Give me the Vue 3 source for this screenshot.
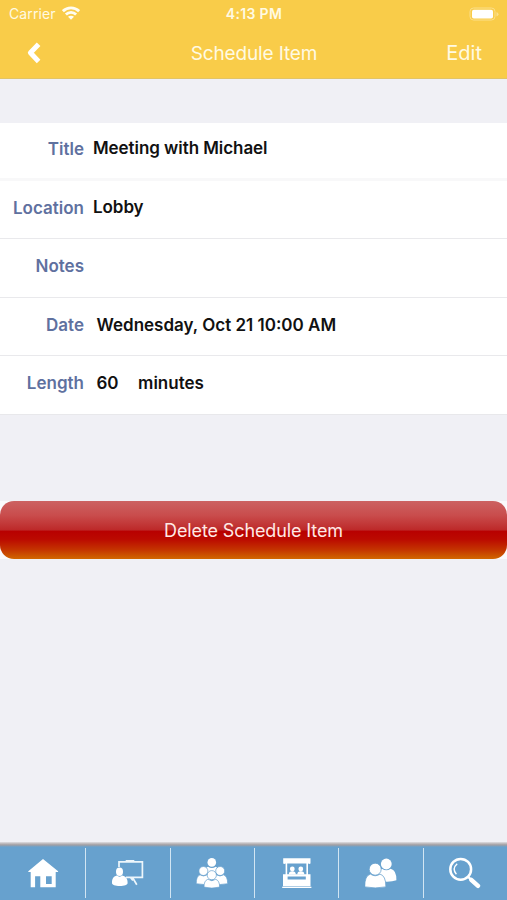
<script setup>
const rows = [
  { label: 'Title', value: 'Meeting with Michael', key: 'title' },
  { label: 'Location', value: 'Lobby', key: 'location' },
  { label: 'Notes', value: '', key: 'notes' },
  { label: 'Date', value: 'Wednesday, Oct 21 10:00 AM', key: 'date' },
  { label: 'Length', value: '60', unit: 'minutes', key: 'length' },
]
</script>

<template>
  <div class="screen">
    <header class="top">
      <div class="status">
        <div class="carrier">
          <span class="carrier-name">Carrier</span>
          <svg class="wifi" viewBox="0 0 18 14" width="18" height="14" fill="none" stroke="#fffdf2" stroke-width="2.8">
            <path d="M.9 5.2C5.4.8 12.6.8 17.1 5.2" />
            <path d="M3.9 8.5c2.8-2.8 7.4-2.8 10.2 0" />
            <path d="M9 13.8 6 10.8c1.6-1.5 4.4-1.5 6 0z" fill="#fffdf2" stroke="none" />
          </svg>
        </div>
        <span class="clock">4:13 PM</span>
        <svg class="battery" viewBox="0 0 30 14" width="30" height="14">
          <rect x="1" y="1" width="25" height="12" rx="3.5" fill="none" stroke="#fbdf8b" />
          <rect x="3" y="2.8" width="21" height="8.8" rx="1.8" fill="#fff" />
          <path d="M27.5 5v4.5q2-.6 2-2.2t-2-2.3z" fill="#fbdf8b" />
        </svg>
      </div>
      <nav class="nav">
        <svg class="back" viewBox="0 0 16 24" width="16" height="24">
          <path d="M12.6 3.2 4.4 11.8l8.2 8.6" fill="none" stroke="#fff" stroke-width="5" stroke-linejoin="round" />
        </svg>
        <span class="heading">Schedule Item</span>
        <span class="edit">Edit</span>
      </nav>
    </header>

    <main class="content">
      <section class="form">
        <div v-for="row in rows" :key="row.key" class="row" :class="row.key">
          <span class="label">{{ row.label }}</span>
          <span class="value">{{ row.value }}</span>
          <span v-if="row.unit" class="unit">{{ row.unit }}</span>
        </div>
      </section>
      <div class="delete-cell">
        <button class="delete"><span>Delete Schedule Item</span></button>
      </div>
    </main>

    <footer class="tabs">
      <div class="tab">
        <svg viewBox="0 0 32 32" width="32" height="32" fill="#fff">
          <path fill-rule="evenodd" d="M16 2 1.3 14.2v.8h2.4v15.3h4.4v-11h5.2v11h15.4V15h2.4v-.8L16 2zM19 19.3h5.7V27H19z" />
        </svg>
      </div>
      <div class="tab">
        <svg viewBox="0 0 32 32" width="32" height="32" fill="#fff">
          <path d="M7 10V4.8h23.4v15.5H14M13.7 3.9h8.6M20.5 20.5l4.3 7.2M18.5 20.5l2.4 3" fill="none" stroke="#edf6fb" stroke-width="1.7" />
          <ellipse cx="7.5" cy="14.8" rx="3.5" ry="4.2" />
          <path d="M4.9 18.5c1.4 1.5 4 1.5 5.4 0 4 1 5.4 3.5 5.3 7.5 0 2-3.3 3-7.8 3S0 28 0 26c0-4 1-6.5 4.9-7.5z" />
        </svg>
      </div>
      <div class="tab">
        <svg class="nudge" viewBox="0 0 32 32" width="32" height="32" fill="#fff">
          <circle cx="15.8" cy="5.4" r="4.3" />
          <path d="M12 9.8q4 2.5 7.7 0 2.8 1.2 2.8 6H9.2q0-4.8 2.8-6z" />
          <g stroke="#67a1ce" stroke-width=".7">
            <circle cx="7.4" cy="14" r="4.5" />
            <circle cx="24.2" cy="14" r="4.5" />
            <path d="M4 17.8q3.5 2.4 7 0 4 1.7 4 8.9-7 1.6-14.8 0Q.1 19.3 4 17.8z" />
            <path d="M20.5 17.8q3.5 2.4 7 0 4.2 1.5 4.2 8.9-7.5 1.6-14.7 0 0-7.3 3.5-8.9z" />
            <circle cx="15.8" cy="18.2" r="4.6" />
            <path d="M11.8 22.3q4 2.8 8 0 3.9 1.4 3.8 7.8-7.8 2-15.6 0-.1-6.4 3.8-7.8z" />
          </g>
        </svg>
      </div>
      <div class="tab">
        <svg viewBox="0 0 32 32" width="32" height="32" fill="#fff">
          <path d="M2.2 1.3h27.3v5.3q-1.1.9-2.3 0H4.5q-1.2.9-2.3 0z" />
          <path d="M4.6 6h1.6v12H4.6zM25.4 6H27v12h-1.6z" />
          <circle cx="11.3" cy="12" r="2.4" /><circle cx="19.8" cy="12" r="2.4" />
          <path d="M7.8 17.5q0-3.2 3.5-3.2t3.5 3.2zM16.3 17.5q0-3.2 3.5-3.2t3.5 3.2z" />
          <path fill-rule="evenodd" d="M2 17.3h27.5v11.9H2zM6.6 19.4v3.2h18.2v-3.2z" />
          <path d="M1.2 29.7h29.2V31H1.2z" />
        </svg>
      </div>
      <div class="tab">
        <svg viewBox="0 0 32 32" width="32" height="32" fill="#fff">
          <circle cx="21.3" cy="7" r="5.4" />
          <path d="M17 11.7q4.3 3 8.6 0 6 1.2 5.8 11.6-5 1.8-12.4 1.3L13 15q1-2.6 4-3.3z" />
          <g stroke="#67a1ce" stroke-width=".8">
            <circle cx="10.2" cy="12.2" r="6" />
            <path d="M5.4 17.1q4.8 3.3 9.6 0 5.9 1.5 5.9 12.8-10.6 2-21.2 0-.1-11.2 5.7-12.8z" />
          </g>
        </svg>
      </div>
      <div class="tab">
        <svg class="nudge" viewBox="0 0 32 32" width="32" height="32" fill="none" stroke="#fff">
          <circle cx="11.7" cy="12.3" r="10.4" stroke-width="2.5" />
          <path d="M8.2 6.8q-5.6 5-.8 10.4" stroke-width="1.4" />
          <path d="m19 19.6 3 3" stroke-width="2.2" />
          <path d="m22.3 22.8 6.7 6" stroke-width="4.4" stroke-linecap="round" />
        </svg>
      </div>
    </footer>
  </div>
</template>

<style>
body {
  margin: 0;
}
</style>

<style scoped>
.screen {
  display: flex;
  flex-direction: column;
  width: 507px;
  height: 900px;
  overflow: hidden;
  background: #f0f0f5;
  font-family: Inter, "Liberation Sans", sans-serif;
}
.top {
  height: 79px;
  box-sizing: border-box;
  background: #f9cc49;
  border-bottom: 1px solid #e2c466;
  color: #fffae3;
  flex: none;
}
.status {
  display: grid;
  grid-template-columns: 1fr auto 1fr;
  height: 27px;
  align-items: center;
  padding: 0 8px 0 9px;
}
.carrier {
  display: flex;
  align-items: center;
  gap: 6px;
}
.carrier-name {
  font-size: 14px;
  letter-spacing: 0.1px;
}
.wifi {
  margin-top: -2px;
}
.clock {
  font-size: 14px;
  font-weight: 600;
  letter-spacing: 0.35px;
}
.battery {
  justify-self: end;
}
.nav {
  display: grid;
  grid-template-columns: 1fr auto 1fr;
  align-items: center;
  height: 51px;
  padding: 0 25px 0 26px;
}
.heading {
  font-size: 19px;
  letter-spacing: -0.13px;
  padding-top: 2px;
}
.edit {
  justify-self: end;
  font-size: 20px;
}
.content {
  flex: 1;
  padding-top: 44px;
}
.form {
  height: 291px;
  display: grid;
  grid-template-rows: 58px 58px 59px 58px 58px;
  background: #fff;
  border-bottom: 1px solid #e8e8eb;
}
.row {
  display: flex;
  align-items: flex-start;
  padding-top: 16px;
  box-sizing: border-box;
  border-bottom: 1px solid #e9e9ec;
  font-size: 17px;
  line-height: 21px;
  font-weight: 600;
}
.row.title {
  padding-top: 15px;
  border-bottom: 3px solid #f8f8f9;
}
.row.date,
.row.length {
  padding-top: 17px;
}
.row.length {
  border-bottom: 0;
}
.label {
  width: 84px;
  text-align: right;
  color: #5f719f;
  padding-top: 1px;
}
.date .label,
.length .label {
  padding-top: 0;
}
.value {
  margin-left: 9px;
  color: #111;
  letter-spacing: -0.06px;
}
.date .value,
.length .value {
  margin-left: 12.5px;
  letter-spacing: 0;
}
.unit {
  margin-left: 19.5px;
  color: #111;
}
.delete-cell {
  height: 58px;
  margin-top: 86px;
  background: #fafafc;
}
.delete {
  display: flex;
  align-items: center;
  justify-content: center;
  width: 100%;
  height: 58px;
  padding: 0;
  border: 0;
  border-radius: 14px;
  background: linear-gradient(#cc6262 0, #c94c4c 25%, #bd2929 50%, #b80000 52%, #bb0a00 66%, #c43400 84%, #d16700 100%);
  color: #ffe9e5;
  font-family: inherit;
  font-size: 18px;
  letter-spacing: -0.12px;
}
.tabs {
  flex: none;
  height: 58px;
  box-sizing: border-box;
  display: grid;
  grid-template-columns: 86px 85px 84px 84px 85px 83px;
  padding-top: 6px;
  background: linear-gradient(#e0dee2 0, #b3afb2 2px, #a09ea3 3px, #67a1ce 5px);
}
.tab {
  display: flex;
  justify-content: center;
  padding-top: 9px;
  height: 50px;
  box-sizing: border-box;
}
.tab:not(:last-child) {
  border-right: 1.5px solid #d1e5f3;
}
.nudge {
  margin-right: 1.5px;
}
</style>
